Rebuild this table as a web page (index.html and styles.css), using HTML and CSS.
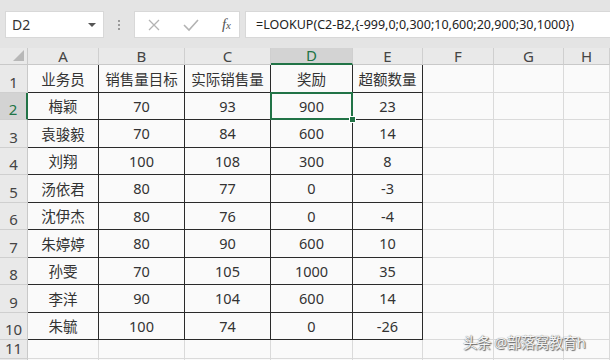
FILE: index.html
```html
<!DOCTYPE html>
<html>
<head>
<meta charset="utf-8">
<link rel="stylesheet" href="styles.css">
</head>
<body>
<div class="app">
  <div class="fbar">
    <div class="namebox"><span class="nb-text">D2</span><span class="nb-arrow"></span></div>
    <div class="vdots"><i></i><i></i><i></i></div>
    <div class="btns">
      <svg class="ico" width="14" height="14" viewBox="0 0 14 14"><path d="M2 2 L12 12 M12 2 L2 12" stroke="#b3b3b3" stroke-width="1.3" fill="none"/></svg>
      <svg class="ico" width="18" height="14" viewBox="0 0 18 14"><path d="M2 7 L7 12 L16 2" stroke="#b3b3b3" stroke-width="1.6" fill="none"/></svg>
      <span class="fx">f<small>x</small></span>
    </div>
    <div class="formula">=LOOKUP(C2-B2,{-999,0;0,300;10,600;20,900;30,1000})</div>
  </div>
  <div class="sheet">
    <div class="corner"><span class="tri"></span></div>
    <div class="h">A</div><div class="h">B</div><div class="h">C</div><div class="h hs">D</div><div class="h">E</div><div class="h">F</div><div class="h">G</div><div class="h">H</div>

    <div class="rh">1</div>
    <div class="c t">业务员</div><div class="c t">销售量目标</div><div class="c t">实际销售量</div><div class="c t">奖励</div><div class="c t">超额数量</div><div class="c"></div><div class="c"></div><div class="c"></div>

    <div class="rh rs">2</div>
    <div class="c t">梅颖</div><div class="c t">70</div><div class="c t">93</div><div class="c t sel">900<span class="handle"></span></div><div class="c t">23</div><div class="c"></div><div class="c"></div><div class="c"></div>

    <div class="rh">3</div>
    <div class="c t">袁骏毅</div><div class="c t">70</div><div class="c t">84</div><div class="c t">600</div><div class="c t">14</div><div class="c"></div><div class="c"></div><div class="c"></div>

    <div class="rh">4</div>
    <div class="c t">刘翔</div><div class="c t">100</div><div class="c t">108</div><div class="c t">300</div><div class="c t">8</div><div class="c"></div><div class="c"></div><div class="c"></div>

    <div class="rh">5</div>
    <div class="c t">汤依君</div><div class="c t">80</div><div class="c t">77</div><div class="c t">0</div><div class="c t">-3</div><div class="c"></div><div class="c"></div><div class="c"></div>

    <div class="rh">6</div>
    <div class="c t">沈伊杰</div><div class="c t">80</div><div class="c t">76</div><div class="c t">0</div><div class="c t">-4</div><div class="c"></div><div class="c"></div><div class="c"></div>

    <div class="rh">7</div>
    <div class="c t">朱婷婷</div><div class="c t">80</div><div class="c t">90</div><div class="c t">600</div><div class="c t">10</div><div class="c"></div><div class="c"></div><div class="c"></div>

    <div class="rh">8</div>
    <div class="c t">孙雯</div><div class="c t">70</div><div class="c t">105</div><div class="c t">1000</div><div class="c t">35</div><div class="c"></div><div class="c"></div><div class="c"></div>

    <div class="rh">9</div>
    <div class="c t">李洋</div><div class="c t">90</div><div class="c t">104</div><div class="c t">600</div><div class="c t">14</div><div class="c"></div><div class="c"></div><div class="c"></div>

    <div class="rh">10</div>
    <div class="c t">朱毓</div><div class="c t">100</div><div class="c t">74</div><div class="c t">0</div><div class="c t">-26</div><div class="c"></div><div class="c"></div><div class="c"></div>

    <div class="rh">11</div>
    <div class="c"></div><div class="c"></div><div class="c"></div><div class="c"></div><div class="c"></div><div class="c"></div><div class="c"></div><div class="c"></div>

    <div class="rh"></div>
    <div class="c"></div><div class="c"></div><div class="c"></div><div class="c"></div><div class="c"></div><div class="c"></div><div class="c"></div><div class="c"></div>
  </div>
  <div class="wm">头条 @部落窝教育h</div>
</div>
</body>
</html>
```
FILE: styles.css
```css
html, body {
  margin: 0;
  padding: 0;
  background: #e5e5e5;
}
.app {
  position: relative;
  width: 610px;
  height: 360px;
  overflow: hidden;
  font-family: "Noto Sans", "Noto Sans CJK SC", sans-serif;
  color: #333;
}
.fbar {
  height: 48px;
  box-sizing: border-box;
  padding-top: 11px;
  display: flex;
  align-items: flex-start;
  background: #e4e4e4;
}
.namebox {
  margin-left: 5px;
  width: 99px;
  height: 27px;
  box-sizing: border-box;
  background: #fff;
  border: 1px solid #d8d8d8;
  display: flex;
  align-items: center;
  justify-content: space-between;
  padding: 0 7px 0 6px;
}
.nb-text {
  font-size: 14px;
  color: #333;
}
.nb-arrow {
  width: 0;
  height: 0;
  border-left: 4px solid transparent;
  border-right: 4px solid transparent;
  border-top: 4px solid #555;
}
.vdots {
  width: 30px;
  height: 27px;
  display: flex;
  flex-direction: column;
  align-items: center;
  justify-content: center;
  gap: 2px;
}
.vdots i {
  width: 2px;
  height: 2px;
  background: #9a9a9a;
}
.btns {
  width: 106px;
  height: 27px;
  box-sizing: border-box;
  background: #fff;
  border: 1px solid #d8d8d8;
  display: flex;
  align-items: center;
  padding: 0 8px 0 12px;
  justify-content: space-between;
}
.fx {
  font-family: "Liberation Serif", serif;
  font-style: italic;
  font-size: 15px;
  color: #555;
  line-height: 1;
}
.fx small {
  font-size: 11px;
}
.formula {
  margin-left: 5px;
  flex: 1;
  height: 27px;
  box-sizing: border-box;
  background: #fff;
  border: 1px solid #d8d8d8;
  border-right: none;
  font-size: 12.5px;
  line-height: 25px;
  padding-left: 10px;
  white-space: nowrap;
  color: #222;
}
.sheet {
  display: grid;
  grid-template-columns: 28px 71px 86px 86px 82px 70px 71px 70px 1fr;
  grid-template-rows: 17px repeat(10, 27.5px) 18.5px 18px;
  background: #fafafa;
}
.corner {
  background: #e9e9e9;
  border-right: 1px solid #c9c9c9;
  border-bottom: 1px solid #c9c9c9;
  position: relative;
}
.tri {
  position: absolute;
  right: 3px;
  bottom: 3px;
  width: 0;
  height: 0;
  border-left: 11px solid transparent;
  border-bottom: 11px solid #b8b8b8;
}
.h {
  background: #e9e9e9;
  border-right: 1px solid #cfcfcf;
  border-bottom: 1px solid #c9c9c9;
  font-size: 15px;
  color: #444;
  display: flex;
  align-items: center;
  justify-content: center;
  line-height: 1;
}
.hs {
  background: #d3d3d3;
  border-bottom: 2px solid #217346;
  color: #217346;
}
.rh {
  background: #e9e9e9;
  border-right: 1px solid #c9c9c9;
  border-bottom: 1px solid #cfcfcf;
  font-size: 15px;
  color: #444;
  display: flex;
  align-items: flex-end;
  justify-content: center;
  line-height: 1;
  padding-bottom: 2px;
  box-sizing: border-box;
}
.rs {
  background: #d3d3d3;
  border-right: 2px solid #217346;
  color: #217346;
}
.c {
  border-right: 1px solid #dadada;
  border-bottom: 1px solid #dadada;
  font-size: 14.5px;
  display: flex;
  align-items: center;
  justify-content: center;
  white-space: nowrap;
  color: #333;
}
.t {
  border-right-color: #2a2a2a;
  border-bottom-color: #2a2a2a;
}
.sel {
  position: relative;
}
.sel::after {
  content: "";
  position: absolute;
  left: -1px;
  top: -1px;
  right: -1px;
  bottom: -1px;
  border: 2px solid #217346;
}
.handle {
  position: absolute;
  right: -4px;
  bottom: -4px;
  width: 5px;
  height: 5px;
  background: #217346;
  border: 1px solid #fff;
  z-index: 2;
}
.wm {
  position: absolute;
  left: 463px;
  top: 331px;
  font-size: 14.5px;
  color: #f4f4f4;
  letter-spacing: -0.5px;
  text-shadow: 0 0 1px #555, 1px 1px 1px #666;
  white-space: nowrap;
}
```
